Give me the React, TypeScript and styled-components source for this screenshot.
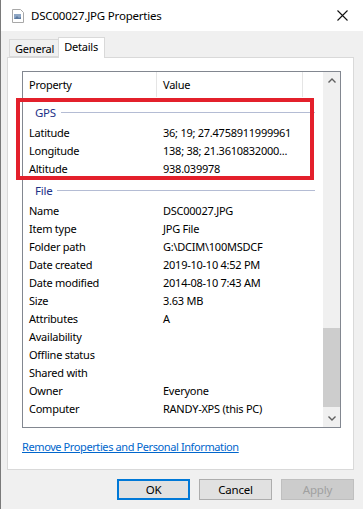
import React from 'react';
import styled, { createGlobalStyle } from 'styled-components';

const GlobalStyle = createGlobalStyle`
  html, body {
    margin: 0;
    padding: 0;
    background: #f0f0f0;
  }
  body {
    font-family: 'Noto Sans', 'Open Sans', 'Liberation Sans', sans-serif;
    font-size: 11px;
    letter-spacing: -0.25px;
    color: #000;
  }
`;

const Window = styled.div`
  position: relative;
  width: 363px;
  height: 509px;
  background: #f0f0f0;
  box-sizing: border-box;
  border-left: 1px solid #7a7a7a;
  overflow: hidden;
  display: flex;
  flex-direction: column;
`;

const TitleBar = styled.div`
  height: 31px;
  background: #fff;
  display: flex;
  align-items: center;
  padding: 0 10px 0 11px;
  flex-shrink: 0;
`;

const Title = styled.span`
  flex: 1;
  margin-left: 7px;
  font-size: 11.5px;
  letter-spacing: -0.2px;
  margin-top: -1px;
`;

const CloseButton = styled.span`
  display: flex;
  width: 14px;
  height: 14px;
  align-items: center;
  justify-content: center;
  margin-right: 4px;
`;

const Body = styled.div`
  flex: 1;
  display: flex;
  flex-direction: column;
  padding: 6px 9px 0 6px;
`;

const TabStrip = styled.div`
  display: flex;
  align-items: flex-end;
  height: 20px;
  padding-left: 2px;
  position: relative;
  z-index: 1;
`;

const Tab = styled.div<{ $active?: boolean }>`
  box-sizing: border-box;
  height: ${(p) => (p.$active ? '21px' : '18px')};
  padding: ${(p) => (p.$active ? '0 6px 3px 5px' : '0 4px 0 5px')};
  margin-bottom: ${(p) => (p.$active ? '-1px' : '0')};
  background: ${(p) => (p.$active ? '#fff' : '#f0f0f0')};
  border: 1px solid #d9d9d9;
  border-bottom: ${(p) => (p.$active ? 'none' : '1px solid #d9d9d9')};
  ${(p) => (p.$active ? 'margin-left: -1px;' : '')}
  display: flex;
  align-items: center;
  font-size: 11px;
  letter-spacing: -0.2px;
`;

const Panel = styled.div`
  background: #fff;
  border: 1px solid #d9d9d9;
  height: 413px;
  box-sizing: border-box;
  padding: 13px 12px 0 14px;
  display: flex;
  flex-direction: column;
`;

const ListView = styled.div`
  height: 357px;
  box-sizing: border-box;
  border: 1px solid #828790;
  display: flex;
`;

const ListMain = styled.div`
  flex: 1;
  display: flex;
  flex-direction: column;
  overflow: hidden;
`;

const HeaderRow = styled.div`
  height: 25px;
  display: grid;
  grid-template-columns: 134px 146px 1fr;
  flex-shrink: 0;
`;

const HeaderCell = styled.div<{ $last?: boolean }>`
  display: flex;
  align-items: center;
  padding-left: 6px;
  padding-bottom: 1px;
  border-right: ${(p) => (p.$last ? 'none' : '1px solid #e5e5e5')};
`;

const GroupHeader = styled.div<{ $first?: boolean }>`
  height: 18px;
  display: flex;
  align-items: center;
  padding-left: 12px;
  margin-top: ${(p) => (p.$first ? '6px' : '4px')};
  margin-bottom: 2px;
  color: #1e3287;
  gap: 5px;
  padding-right: 8px;
  font-size: 11.5px;
`;

const GroupLine = styled.div`
  flex: 1;
  height: 1px;
  background: #b4bcd4;
  margin-top: 1px;
`;

const Row = styled.div`
  height: 18px;
  display: grid;
  grid-template-columns: 134px 1fr;
  align-items: center;
`;

const Cell = styled.div`
  padding-left: 6px;
  white-space: nowrap;
  overflow: hidden;
`;

const ScrollBar = styled.div`
  width: 17px;
  background: #f0f0f0;
  display: flex;
  flex-direction: column;
  flex-shrink: 0;
`;

const ScrollArrow = styled.div`
  height: 17px;
  display: flex;
  align-items: center;
  justify-content: center;
`;

const ScrollTrack = styled.div`
  flex: 1;
  display: flex;
  flex-direction: column;
  justify-content: flex-end;
  padding-bottom: 3px;
`;

const Thumb = styled.div`
  height: 79px;
  background: #cdcdcd;
`;

const Link = styled.a`
  margin-top: 11px;
  color: #0066cc;
  text-decoration: underline;
  align-self: flex-start;
  letter-spacing: -0.4px;
`;

const ButtonRow = styled.div`
  display: flex;
  justify-content: flex-end;
  gap: 9px;
  margin-top: 9px;
`;

const Button = styled.button<{ $default?: boolean; $disabled?: boolean }>`
  width: 73px;
  height: 21px;
  box-sizing: border-box;
  font-family: inherit;
  font-size: 11.5px;
  letter-spacing: -0.2px;
  padding: 0;
  color: ${(p) => (p.$disabled ? '#a0a0a0' : '#000')};
  background: ${(p) => (p.$disabled ? '#cccccc' : '#e1e1e1')};
  border: ${(p) =>
    p.$default ? '2px solid #0078d7' : p.$disabled ? '1px solid #bfbfbf' : '1px solid #adadad'};
`;

const Highlight = styled.div`
  position: absolute;
  left: 15px;
  top: 98px;
  width: 298px;
  height: 82px;
  box-sizing: border-box;
  border: 4px solid #e3202b;
  pointer-events: none;
`;

const FileIcon = () => (
  <svg width="12" height="14" viewBox="0 0 12 14">
    <path d="M0.5 0.5h8l3 3v10h-11z" fill="#fff" stroke="#a8a8a8" />
    <rect x="2" y="5" width="7" height="5" fill="#8ea6c4" />
    <path d="M2 10l3-3 2 2 2-1v2z" fill="#5b7aa0" />
  </svg>
);

const CloseIcon = () => (
  <svg width="11" height="11" viewBox="0 0 11 11">
    <path d="M0.5 0.5l10 10M10.5 0.5l-10 10" stroke="#111" strokeWidth="1.1" />
  </svg>
);

const Chevron = ({ up }: { up?: boolean }) => (
  <svg width="8" height="5" viewBox="0 0 8 5">
    <path
      d={up ? 'M0.5 4.5L4 1l3.5 3.5' : 'M0.5 0.5L4 4l3.5-3.5'}
      fill="none"
      stroke="#606060"
      strokeWidth="1.4"
    />
  </svg>
);

const gps: [string, string][] = [
  ['Latitude', '36; 19; 27.4758911999961'],
  ['Longitude', '138; 38; 21.3610832000...'],
  ['Altitude', '938.039978'],
];

const file: [string, string][] = [
  ['Name', 'DSC00027.JPG'],
  ['Item type', 'JPG File'],
  ['Folder path', 'G:\\DCIM\\100MSDCF'],
  ['Date created', '2019-10-10 4:52 PM'],
  ['Date modified', '2014-08-10 7:43 AM'],
  ['Size', '3.63 MB'],
  ['Attributes', 'A'],
  ['Availability', ''],
  ['Offline status', ''],
  ['Shared with', ''],
  ['Owner', 'Everyone'],
  ['Computer', 'RANDY-XPS (this PC)'],
];

const App: React.FC = () => {
  return (
    <>
      <GlobalStyle />
      <Window>
        <TitleBar>
          <FileIcon />
          <Title>DSC00027.JPG Properties</Title>
          <CloseButton>
            <CloseIcon />
          </CloseButton>
        </TitleBar>
        <Body>
          <TabStrip>
            <Tab>General</Tab>
            <Tab $active>Details</Tab>
          </TabStrip>
          <Panel>
            <ListView>
              <ListMain>
                <HeaderRow>
                  <HeaderCell>Property</HeaderCell>
                  <HeaderCell>Value</HeaderCell>
                  <HeaderCell $last />
                </HeaderRow>
                <GroupHeader $first>
                  GPS
                  <GroupLine />
                </GroupHeader>
                {gps.map(([k, v]) => (
                  <Row key={k}>
                    <Cell>{k}</Cell>
                    <Cell>{v}</Cell>
                  </Row>
                ))}
                <GroupHeader>
                  File
                  <GroupLine />
                </GroupHeader>
                {file.map(([k, v]) => (
                  <Row key={k}>
                    <Cell>{k}</Cell>
                    <Cell>{v}</Cell>
                  </Row>
                ))}
              </ListMain>
              <ScrollBar>
                <ScrollArrow>
                  <Chevron up />
                </ScrollArrow>
                <ScrollTrack>
                  <Thumb />
                </ScrollTrack>
                <ScrollArrow>
                  <Chevron />
                </ScrollArrow>
              </ScrollBar>
            </ListView>
            <Link>Remove Properties and Personal Information</Link>
          </Panel>
          <ButtonRow>
            <Button $default>OK</Button>
            <Button>Cancel</Button>
            <Button $disabled>Apply</Button>
          </ButtonRow>
        </Body>
        <Highlight />
      </Window>
    </>
  );
};

export default App;
